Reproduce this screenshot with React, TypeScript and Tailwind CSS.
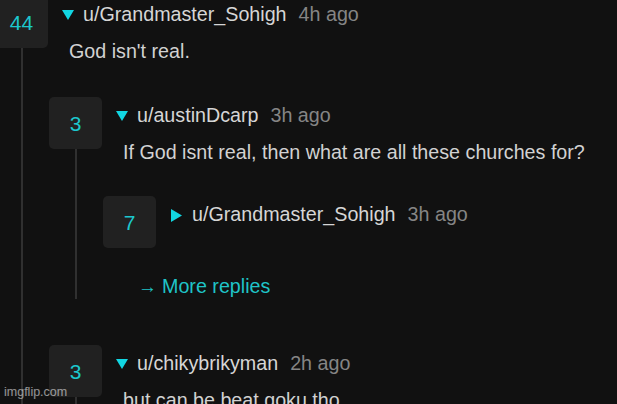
import React from "react";

type C = {
  score: string;
  user: string;
  time: string;
  body?: string;
  collapsed?: boolean;
  childGap?: number;
  children?: React.ReactNode;
  line?: boolean;
  padBottom?: number;
};

function TriDown() {
  return (
    <svg width="12" height="10" viewBox="0 0 12 10" className="shrink-0">
      <polygon points="0,0 12,0 6,10" fill="#12d6e2" />
    </svg>
  );
}
function TriRight() {
  return (
    <svg width="11" height="13" viewBox="0 0 11 13" className="shrink-0">
      <polygon points="0,0 11,6.5 0,13" fill="#12d6e2" />
    </svg>
  );
}

function Comment({ score, user, time, body, collapsed, childGap = 28, children, line, padBottom = 0 }: C) {
  return (
    <div className="flex" style={{ paddingBottom: padBottom }}>
      <div className="flex flex-col items-center w-[53px] shrink-0">
        <div className="w-[53px] h-[52px] rounded-[5px] bg-[#212121] flex items-center justify-center text-[21px] text-[#1cc7cd] leading-none">
          {score}
        </div>
        {line && <div className="w-[2px] flex-1 bg-[#303030]" />}
      </div>
      <div className="flex-1 ml-px flex flex-col">
        <div className={`h-[38px] flex items-center ${collapsed ? "pl-[14px]" : "pl-[13px]"}`}>
          {collapsed ? <TriRight /> : <TriDown />}
          <span className={`${collapsed ? "ml-[10px]" : "ml-[9px]"} text-[#d6d6d6]`}>{user}</span>
          <span className="ml-[12px] text-[#858585]">{time}</span>
        </div>
        {body && <div className="pl-[20px] leading-[34px] text-[#d2d2d2] whitespace-nowrap">{body}</div>}
        {children && (
          <div className="flex flex-col" style={{ marginTop: childGap }}>
            {children}
          </div>
        )}
      </div>
    </div>
  );
}

export default function App() {
  return (
    <div
      className="relative w-[617px] h-[404px] overflow-hidden bg-[#111111] text-[19.7px]"
      style={{ fontFamily: '"Liberation Sans", Arial, sans-serif' }}
    >
      <div className="ml-[-5px] mt-[-4px]">
        <Comment score="44" user="u/Grandmaster_Sohigh" time="4h ago" body="God isn't real." line childGap={29}>
          <Comment
            score="3"
            user="u/austinDcarp"
            time="3h ago"
            body="If God isnt real, then what are all these churches for?"
            line
            childGap={27}
            padBottom={12}
          >
            <Comment score="7" user="u/Grandmaster_Sohigh" time="3h ago" collapsed />
            <div className="mt-[27px] h-[24px] flex items-center pl-[35px] text-[#1fc4c8]">
              <span className="text-[19px] mr-[5px]">→</span>
              <span>More replies</span>
            </div>
          </Comment>
          <div className="mt-[34px]">
            <Comment score="3" user="u/chikybrikyman" time="2h ago" body="but can be beat goku tho" line />
          </div>
        </Comment>
      </div>
      <div className="absolute left-[4px] top-[386px] text-[12.5px] text-white/55 leading-none">imgflip.com</div>
    </div>
  );
}
